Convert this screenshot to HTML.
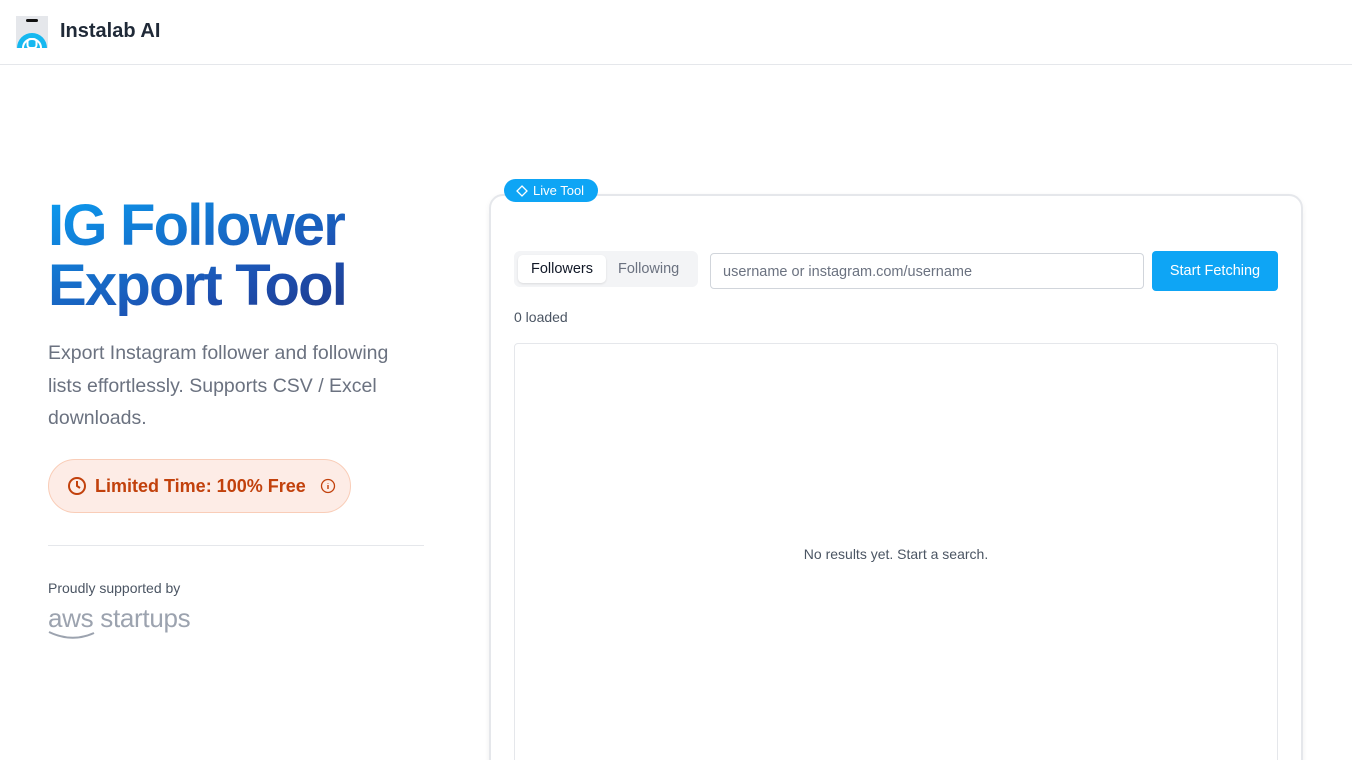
<!DOCTYPE html>
<html><head><meta charset="utf-8"><style>
*{box-sizing:border-box;margin:0;padding:0}
html,body{width:1352px;height:760px;overflow:hidden}
body{background:#fff;font-family:"Liberation Sans",sans-serif;color:#111827;position:relative}
.hdr{height:65px;border-bottom:1px solid #e5e7eb;position:relative}
.logo{position:absolute;left:16px;top:16px;width:32px;height:32px;background:#e5e7eb}
.brand{position:absolute;left:60px;top:20px;font-size:20px;font-weight:bold;color:#1f2937}
h1{position:absolute;left:48px;top:196px;font-size:58px;line-height:60px;letter-spacing:-1.8px;font-weight:bold;background:linear-gradient(160deg,#0b9cf0 0%,#1d4fb0 70%,#1e3a8a 100%);-webkit-background-clip:text;background-clip:text;color:transparent}
.sub{position:absolute;left:48px;top:337px;width:375px;font-size:19.5px;line-height:32.5px;color:#6b7280}
.pill{position:absolute;left:48px;top:459px;width:303px;height:54px;border-radius:27px;background:#fdece6;border:1px solid #f9cdb8;color:#c2410c;font-weight:bold;font-size:18px;display:flex;align-items:center;padding-left:18px;gap:8px}
.hr{position:absolute;left:48px;top:545px;width:376px;border-top:1px solid #e5e7eb}
.prd{position:absolute;left:48px;top:580px;font-size:14px;color:#4b5563}
.aws{position:absolute;left:48px;top:603px;font-size:26px;color:#9ca3af;letter-spacing:-0.3px}
.card{position:absolute;left:489px;top:194px;width:814px;height:620px;border:2px solid #e5e7eb;border-radius:14px;box-shadow:0 2px 6px rgba(0,0,0,.06)}
.live{position:absolute;left:504px;top:179px;width:94px;height:23px;border-radius:12px;background:#0ea5f5;color:#fff;font-size:13px;display:flex;align-items:center;padding-left:12px;gap:5px}
.tabs{position:absolute;left:514px;top:251px;width:184px;height:36px;background:#f3f4f6;border-radius:6px}
.t1{position:absolute;left:4px;top:4px;width:88px;height:28px;background:#fff;border-radius:5px;box-shadow:0 1px 2px rgba(0,0,0,.1);font-size:14.5px;color:#111827;text-align:center;line-height:28px}
.t2{position:absolute;left:104px;top:4px;font-size:14.5px;color:#6b7280;line-height:28px}
.inp{position:absolute;left:710px;top:253px;width:434px;height:36px;border:1px solid #d1d5db;border-radius:4px;font-size:14.5px;color:#6b7280;padding-left:12px;line-height:36px}
.btn{position:absolute;left:1152px;top:251px;width:126px;height:40px;background:#0ea5f5;border-radius:4px;color:#fff;font-size:14.5px;text-align:center;line-height:40px}
.ld{position:absolute;left:514px;top:309px;font-size:14px;color:#4b5563}
.res{position:absolute;left:514px;top:343px;width:764px;height:440px;border:1px solid #e5e7eb;border-radius:4px}
.nr{position:absolute;left:0;right:0;top:202px;text-align:center;font-size:14px;color:#4b5563}
</style></head><body>
<div class="hdr"><div class="logo"><svg width="32" height="32" viewBox="0 0 32 32"><rect x="10" y="3" width="12" height="3" rx="1.5" fill="#111"/><path d="M1 32 A15 15 0 0 1 31 32 Z" fill="#16b8f0"/><path d="M7 32 A9 9 0 0 1 25 32" fill="none" stroke="#fff" stroke-width="2"/><rect x="11.5" y="23" width="9" height="9" rx="3" fill="none" stroke="#fff" stroke-width="2"/></svg></div><div class="brand">Instalab AI</div></div>
<h1>IG Follower<br>Export Tool</h1>
<div class="sub">Export Instagram follower and following lists effortlessly. Supports CSV / Excel downloads.</div>
<div class="pill"><svg width="20" height="20" viewBox="0 0 20 20"><circle cx="10" cy="10" r="8" fill="none" stroke="#c2410c" stroke-width="2"/><path d="M10 5v5l3 2" fill="none" stroke="#c2410c" stroke-width="2"/></svg>Limited Time: 100% Free<svg style="margin-left:6px" width="16" height="16" viewBox="0 0 16 16"><circle cx="8" cy="8" r="6.5" fill="none" stroke="#c2410c" stroke-width="1.3"/><path d="M8 7v4M8 5v.5" stroke="#c2410c" stroke-width="1.4"/></svg></div>
<div class="hr"></div>
<div class="prd">Proudly supported by</div>
<div class="aws">aws startups<svg style="position:absolute;left:0;top:26px" width="50" height="12" viewBox="0 0 50 12"><path d="M1 3 Q24 14 46 4" fill="none" stroke="#9ca3af" stroke-width="2"/></svg></div>
<div class="card"></div>
<div class="live"><svg width="12" height="12" viewBox="0 0 12 12"><path d="M6 1 L11 6 L6 11 L1 6 Z" fill="none" stroke="#fff" stroke-width="1.3"/></svg>Live Tool</div>
<div class="tabs"><div class="t1">Followers</div><div class="t2">Following</div></div>
<div class="inp">username or instagram.com/username</div>
<div class="btn">Start Fetching</div>
<div class="ld">0 loaded</div>
<div class="res"><div class="nr">No results yet. Start a search.</div></div>
</body></html>
